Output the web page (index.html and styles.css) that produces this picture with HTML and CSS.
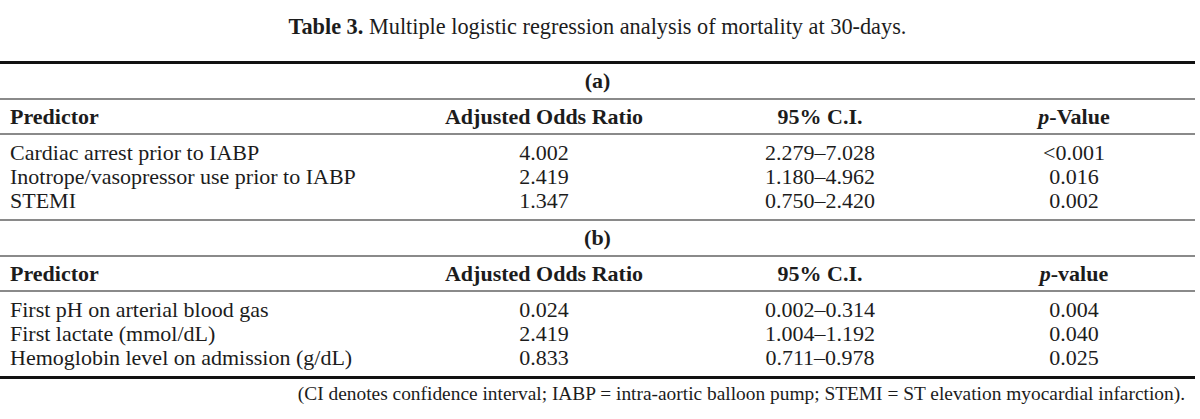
FILE: index.html
```html
<!DOCTYPE html>
<html>
<head>
<meta charset="utf-8">
<link rel="stylesheet" href="styles.css">
</head>
<body>
<div class="page">
  <p class="caption"><b>Table 3.</b> Multiple logistic regression analysis of mortality at 30-days.</p>
  <table class="t">
    <colgroup>
      <col class="c1"><col class="c2"><col class="c3"><col class="c4">
    </colgroup>
    <tbody>
      <tr class="sec first"><th colspan="4">(a)</th></tr>
      <tr class="head"><th class="l">Predictor</th><th>Adjusted Odds Ratio</th><th>95% C.I.</th><th><i>p</i>-Value</th></tr>
      <tr class="row top"><td class="l">Cardiac arrest prior to IABP</td><td>4.002</td><td>2.279–7.028</td><td>&lt;0.001</td></tr>
      <tr class="row"><td class="l">Inotrope/vasopressor use prior to IABP</td><td>2.419</td><td>1.180–4.962</td><td>0.016</td></tr>
      <tr class="row bot"><td class="l">STEMI</td><td>1.347</td><td>0.750–2.420</td><td>0.002</td></tr>
      <tr class="sec"><th colspan="4">(b)</th></tr>
      <tr class="head"><th class="l">Predictor</th><th>Adjusted Odds Ratio</th><th>95% C.I.</th><th><i>p</i>-value</th></tr>
      <tr class="row top"><td class="l">First pH on arterial blood gas</td><td>0.024</td><td>0.002–0.314</td><td>0.004</td></tr>
      <tr class="row"><td class="l">First lactate (mmol/dL)</td><td>2.419</td><td>1.004–1.192</td><td>0.040</td></tr>
      <tr class="row bot last"><td class="l">Hemoglobin level on admission (g/dL)</td><td>0.833</td><td>0.711–0.978</td><td>0.025</td></tr>
    </tbody>
  </table>
  <p class="note">(CI denotes confidence interval; IABP = intra-aortic balloon pump; STEMI = ST elevation myocardial infarction).</p>
</div>
</body>
</html>
```

FILE: styles.css
```css
html, body {
  margin: 0;
  padding: 0;
  background: #ffffff;
}
body {
  font-family: "Liberation Serif", "Times New Roman", serif;
  color: #1c1c1c;
  font-size: 22px;
}
.page {
  width: 1195px;
  padding-top: 15px;
}
.caption {
  margin: 0 0 22px 0;
  text-align: center;
  line-height: 24px;
  font-size: 22.3px;
}
.t {
  width: 1195px;
  border-collapse: collapse;
  table-layout: fixed;
}
.c1 { width: 401px; }
.c2 { width: 286px; }
.c3 { width: 266px; }
.c4 { width: 242px; }
.t th, .t td {
  padding: 0;
  text-align: center;
  line-height: 24px;
  font-weight: normal;
  white-space: nowrap;
}
.t th { font-weight: bold; }
.t .l {
  text-align: left;
  padding-left: 10px;
}
.sec th {
  height: 34px;
  border-bottom: 2px solid #8a8a8a;
}
.first th {
  border-top: 3px solid #111111;
}
.head th {
  height: 33px;
  border-bottom: 2px solid #8a8a8a;
}
.row.top td { padding-top: 6px; }
.row.bot td {
  padding-bottom: 6px;
  border-bottom: 2px solid #8a8a8a;
}
.row.last td {
  border-bottom: 3px solid #111111;
}
.note {
  margin: 3px 0 0 0;
  text-align: right;
  padding-right: 10px;
  line-height: 24px;
  font-size: 19.4px;
}
```
